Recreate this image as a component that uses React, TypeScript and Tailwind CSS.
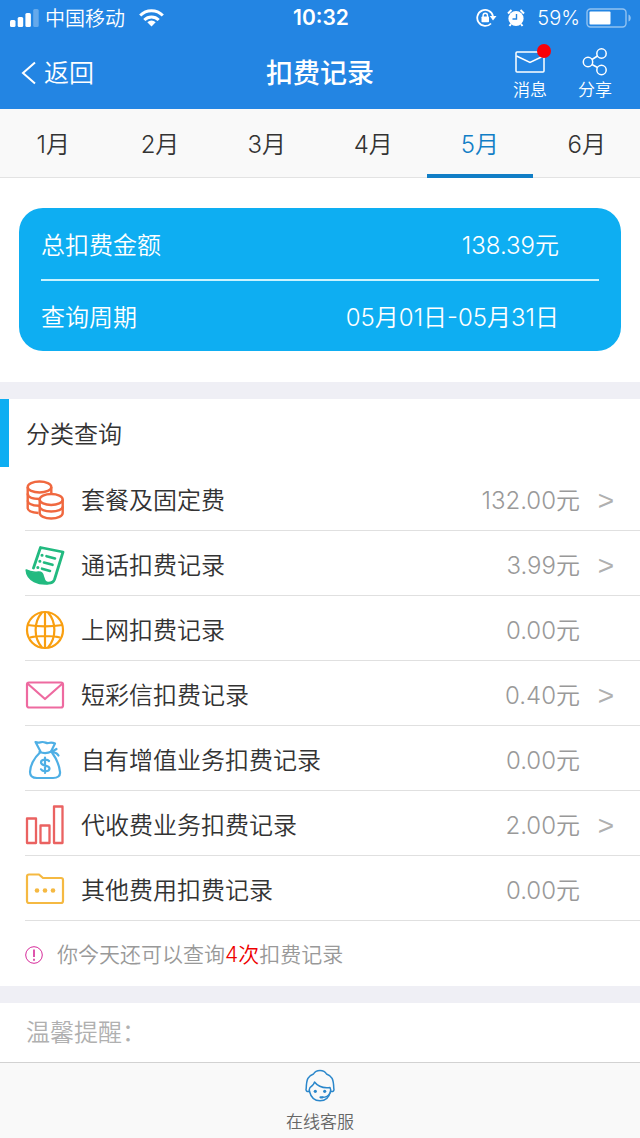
import type { ReactNode } from "react";

const months = ["1月", "2月", "3月", "4月", "5月", "6月"];
const activeMonth = "5月";

function CoinsIcon() {
  return (
    <svg width="40" height="40" viewBox="0 0 40 40" fill="none" stroke="#f0683f" strokeWidth="2.400" aria-hidden="true">
      <ellipse cx="14.500" cy="7" rx="11.800" ry="5.500" />
      <path d="M2.700 7v21c0 2.500 4 4.500 10.800 5" />
      <path d="M26.300 7v7" />
      <path d="M2.700 13.500c0 3.500 5 5.500 12.300 5.500M2.700 20.500c0 3 4 5 11.300 5.300" />
      <ellipse cx="26.200" cy="19.500" rx="11.500" ry="5.500" />
      <path d="M14.700 19.500v13.500c0 3 5 5.500 11.500 5.500S37.700 36 37.700 33V19.500" />
      <path d="M14.700 26.500c0 3 5 5 11.500 5S37.700 29.500 37.700 26.500" />
    </svg>
  );
}

function BillIcon() {
  return (
    <svg width="40" height="40" viewBox="0 0 40 40" fill="none" stroke="#22ba80" strokeLinecap="round" strokeLinejoin="round" aria-hidden="true">
      <path d="M8.500 23 15.500 2.500 38 7 29.500 34.500c-1.200 3-4.500 4-8 3.500" strokeWidth="2.800" />
      <path d="M1.200 25c4.500 2.500 8 2.500 12 2 3-.3 4.500.8 5 4 .5 3 1.500 5.500 4.500 7.800C14.500 39.500 2 36.500 1.200 25Z" fill="#22ba80" strokeWidth="1.600" />
      <path d="M21.500 11.200 30 13.500M19 17.500l8.500 2.300M17 23.700l8 2.300" strokeWidth="2.600" />
      <path d="M17 10.200h.1M14.800 16.300h.1M12.800 22.500h.1" strokeWidth="3" />
    </svg>
  );
}

function GlobeIcon() {
  return (
    <svg width="40" height="40" viewBox="0 0 40 40" fill="none" stroke="#f99f10" strokeWidth="2.200" aria-hidden="true">
      <circle cx="20" cy="20" r="18" />
      <path d="M20 2v36M2.500 15c10 1.500 25 1.500 35 0M5 27.500c8-2 22-2 30 0" />
      <path d="M17 2.500C8.500 12 8.500 28 17 37.500M23 2.500c8.500 9.500 8.500 25.500 0 35" />
    </svg>
  );
}

function MailIcon() {
  return (
    <svg width="40" height="40" viewBox="0 0 40 40" fill="none" stroke="#ee6aa0" strokeWidth="2.200" strokeLinejoin="round" aria-hidden="true">
      <rect x="2" y="7.500" width="36" height="25" rx="2" />
      <path d="m2.500 8.500 17.500 15.500 17.500-15.500" />
    </svg>
  );
}

function MoneyBagIcon() {
  return (
    <svg width="40" height="40" viewBox="0 0 40 40" fill="none" stroke="#4eafe5" strokeWidth="2.200" strokeLinecap="round" strokeLinejoin="round" aria-hidden="true">
      <path d="M15.500 11.500 10.500 2c3 1.500 4.500 0 7 0 3 0 3.500 1.500 6 1 2.500-.6 4-.6 6.500.500L26 11.500" />
      <path d="M14.500 12c4 1.500 9 1 12-.500 2-.8 3.500-1.500 5-2.500M28 12c2 .5 4.500 1.500 5.500 3.500" />
      <path d="M15 12.500C9 18 5 26 5 32c0 4.500 3 6 7 6h16c4.500 0 7.500-2 7-6-.7-7-4-14-8-19.500" />
      <path d="M24 21c-1.500-2-8-2-8 1.500 0 4 8.500 2.200 8.500 6 0 3.500-7 3.500-8.500.800M20 17.500V33" />
    </svg>
  );
}

function BarsIcon() {
  return (
    <svg width="40" height="40" viewBox="0 0 40 40" fill="none" stroke="#ea6261" strokeWidth="2.300" strokeLinejoin="round" aria-hidden="true">
      <path d="M2 13.500h9V38H2zM15.500 20.500h9V38h-9zM29 1.500h8.500V38H29z" />
    </svg>
  );
}

function FolderIcon() {
  return (
    <svg width="40" height="40" viewBox="0 0 40 40" fill="none" stroke="#f5b942" strokeWidth="2.200" strokeLinejoin="round" aria-hidden="true">
      <path d="M2 6.500c0-1.500.7-2 2-2h10l4 3.500h18c1.500 0 2 .7 2 2v21c0 1.300-.7 2-2 2H4c-1.300 0-2-.7-2-2Z" />
      <g fill="#f5b942" stroke="none">
        <circle cx="12" cy="20.500" r="2.300" />
        <circle cx="20" cy="20.500" r="2.300" />
        <circle cx="28" cy="20.500" r="2.300" />
      </g>
    </svg>
  );
}

type Row = { label: string; amount: string; icon: ReactNode; more: boolean };

const rows: Row[] = [
  { label: "套餐及固定费", amount: "132.00元", icon: <CoinsIcon />, more: true },
  { label: "通话扣费记录", amount: "3.99元", icon: <BillIcon />, more: true },
  { label: "上网扣费记录", amount: "0.00元", icon: <GlobeIcon />, more: false },
  { label: "短彩信扣费记录", amount: "0.40元", icon: <MailIcon />, more: true },
  { label: "自有增值业务扣费记录", amount: "0.00元", icon: <MoneyBagIcon />, more: false },
  { label: "代收费业务扣费记录", amount: "2.00元", icon: <BarsIcon />, more: true },
  { label: "其他费用扣费记录", amount: "0.00元", icon: <FolderIcon />, more: false },
];

function StatusBar() {
  return (
    <div className="grid h-9 grid-cols-3 items-center pr-2 pl-2.5 text-xl">
      <div className="flex items-center">
        <svg width="29" height="18" viewBox="0 0 29 18" fill="#fff" aria-hidden="true">
          <rect y="11" width="5.500" height="7" rx="1.500" />
          <rect x="7.700" y="8" width="5.500" height="10" rx="1.500" />
          <rect x="15.400" y="4" width="5.500" height="14" rx="1.500" />
          <rect x="23.200" y="0" width="5.500" height="18" rx="1.500" opacity=".3" />
        </svg>
        <span className="ml-1.5 pt-0.5 whitespace-nowrap">中国移动</span>
        <svg className="ml-3.5" width="25" height="18" viewBox="0 0 25 18" fill="none" stroke="#fff" strokeWidth="3" aria-hidden="true">
          <path d="M1.200 6.500a16 16 0 0 1 22.600 0M5.300 11a10.200 10.200 0 0 1 14.400 0" />
          <path d="M12.500 17.500 8.300 13.300a6 6 0 0 1 8.400 0Z" fill="#fff" stroke="none" />
        </svg>
      </div>
      <time className="text-center text-[21px] font-semibold">10:32</time>
      <div className="flex items-center justify-end">
        <svg width="21" height="20" viewBox="0 0 21 20" fill="none" stroke="#fff" strokeWidth="1.800" aria-label="方向锁定">
          <path d="M15 15.500A8 8 0 1 1 17 8" />
          <path d="M13.800 8h6.700L17 12.500Z" fill="#fff" stroke="none" />
          <rect x="5.500" y="8.500" width="7.500" height="5.800" rx=".8" fill="#fff" stroke="none" />
          <path d="M7.100 9V7.500a2.200 2.200 0 0 1 4.400 0V9" strokeWidth="1.400" />
        </svg>
        <svg className="ml-2.5" width="18" height="18" viewBox="0 0 18 18" aria-label="闹钟">
          <circle cx="9" cy="9.500" r="7.600" fill="#fff" />
          <path d="M1 4.500 4.500 1M17 4.500 13.500 1M4 15l-1.500 2M14 15l1.500 2" stroke="#fff" strokeWidth="2" />
          <path d="M9.500 5v5H5.500" fill="none" stroke="#2385e3" strokeWidth="1.400" />
        </svg>
        <span className="ml-3">59%</span>
        <svg className="ml-1.5" width="46" height="20" viewBox="0 0 46 20" aria-label="电量">
          <rect x="1" y="1" width="39" height="18" rx="3.500" fill="none" stroke="#fff" strokeWidth="1.400" opacity=".5" />
          <rect x="3.500" y="3.500" width="21" height="13" rx="1" fill="#fff" />
          <path d="M42.500 6.500c3 1 3 6 0 7Z" fill="#fff" opacity=".5" />
        </svg>
      </div>
    </div>
  );
}

function Header() {
  return (
    <header className="h-[109px] bg-[#2385e3] text-white">
      <StatusBar />
      <div className="grid h-[73px] grid-cols-3 items-center px-5">
        <button type="button" className="flex items-center gap-2 text-[25px]">
          <svg width="16" height="24" viewBox="0 0 16 24" fill="none" stroke="#fff" strokeWidth="2" aria-hidden="true">
            <path d="M15 1.500 3 12l12 10.500" />
          </svg>
          <span className="pt-0.5">返回</span>
        </button>
        <h1 className="pt-1 text-center text-[27px] font-medium whitespace-nowrap">扣费记录</h1>
        <div className="flex justify-end gap-[31px] pr-2 text-[17px] leading-5">
          <button type="button" className="flex flex-col items-center gap-0.5">
            <span className="relative flex h-8 items-center">
              <svg width="30" height="22" viewBox="0 0 30 22" fill="none" stroke="#fff" strokeWidth="1.500" aria-hidden="true">
                <rect x="1" y="1" width="28" height="20" rx="1" />
                <path d="m1.500 5 13.500 6.500L28.500 5" />
              </svg>
              <span className="absolute -top-0.5 -right-1.5 size-3.5 rounded-full bg-[#fa0008]" />
            </span>
            消息
          </button>
          <button type="button" className="flex flex-col items-center gap-0.5">
            <span className="flex h-8 items-center">
              <svg width="26" height="28" viewBox="0 0 26 28" fill="none" stroke="#fff" strokeWidth="1.500" aria-hidden="true">
                <circle cx="6" cy="14" r="4.700" />
                <circle cx="19.500" cy="5.500" r="4.700" />
                <circle cx="19.500" cy="22" r="4.700" />
                <path d="m10 11.500 5.500-3.500M10 16.500l5.500 3" />
              </svg>
            </span>
            分享
          </button>
        </div>
      </div>
    </header>
  );
}

function MonthTabs() {
  return (
    <nav className="grid h-[69px] grid-cols-6 border-b border-[#e3e3e3] bg-[#f9f9f9]" aria-label="月份">
      {months.map((month) => (
        <button
          key={month}
          type="button"
          className={
            month === activeMonth
              ? "-mb-px border-b-4 border-[#117ec6] pt-1.5 text-2xl text-[#117ec6]"
              : "pt-1 text-2xl text-[#333]"
          }
        >
          {month}
        </button>
      ))}
    </nav>
  );
}

function Summary() {
  return (
    <section className="px-[19px] pt-[30px] pb-[31px]">
      <dl className="rounded-3xl bg-[#0eaef2] px-[22px] text-2xl text-white">
        <div className="flex h-[73px] items-center justify-between border-b-2 border-[#c8f3ff] pt-1 pr-10">
          <dt>总扣费金额</dt>
          <dd>138.39元</dd>
        </div>
        <div className="flex h-[70px] items-center justify-between pt-1 pr-10">
          <dt>查询周期</dt>
          <dd>05月01日-05月31日</dd>
        </div>
      </dl>
    </section>
  );
}

function Categories() {
  return (
    <section className="border-t-[17px] border-[#efeff5]">
      <h2 className="flex h-[68px] items-center border-l-[9px] border-[#0eaef2] pt-1 pl-[17px] text-2xl text-[#333]">
        分类查询
      </h2>
      <ul className="-mt-px pl-[25px] text-2xl">
        {rows.map((row) => (
          <li key={row.label} className="border-b border-[#e0e0e0]">
            <button type="button" className="flex h-16 w-full items-center pt-1 pr-6 text-left">
              {row.icon}
              <span className="ml-4 pt-0.5 text-[#333]">{row.label}</span>
              <span className="ml-auto pt-0.5 text-[#999]">{row.amount}</span>
              <span className="ml-4 w-5 pt-0.5 text-center font-['Liberation_Sans',sans-serif] text-[28px] leading-8 text-[#b0b0b0]">
                {row.more ? ">" : ""}
              </span>
            </button>
          </li>
        ))}
      </ul>
      <p className="flex h-[65px] items-center pt-0.5 pl-[25px] text-[21px] text-[#999]">
        <svg className="mr-3.5" width="18" height="18" viewBox="0 0 18 18" fill="none" stroke="#d62b9a" aria-hidden="true">
          <circle cx="9" cy="9" r="8.300" />
          <path d="M9 3.500v7.500M9 12.800v2" strokeWidth="1.600" />
        </svg>
        <span>
          你今天还可以查询<em className="text-[#ee0000] not-italic">4次</em>扣费记录
        </span>
      </p>
    </section>
  );
}

function Footer() {
  return (
    <footer className="sticky bottom-0 h-[76px] border-t border-[#d2d2d2] bg-[#f9f9f9]">
      <button type="button" className="flex h-full w-full flex-col items-center justify-center gap-2 pt-0.5 text-[17px] leading-6 text-[#666]">
        <svg width="30" height="33" viewBox="0 0 30 33" fill="none" stroke="#2b87cb" strokeWidth="1.500" strokeLinecap="round" strokeLinejoin="round" aria-hidden="true">
          <path d="M4.500 22.500C1.500 23 .6 21.500 1.200 19.500 1.500 10 3 7 8.500 5c2.500-4.700 10.500-4.700 13 0C27 7 28.500 10 28.800 19.500c.6 2-.3 3.500-3.300 3" />
          <path d="M4.500 22.500C6 28.500 9.500 31.800 15 31.800S24 28.500 25.500 22.500c.5-2 0-3-.5-4-6 .8-12-1-15.500-5.500C9 16 6.500 17.500 5 18.500c-.7 1.300-1 2.500-.5 4Z" />
          <path d="M25 24c-1.500 3-4 4.300-7.500 4.300" />
          <path d="M17.500 28.300h-2" strokeWidth="2.200" />
          <circle cx="10.300" cy="22.300" r="1.600" fill="#2b87cb" stroke="none" />
          <circle cx="19.700" cy="22.300" r="1.600" fill="#2b87cb" stroke="none" />
        </svg>
        在线客服
      </button>
    </footer>
  );
}

export default function App() {
  return (
    <div
      className="flex min-h-screen flex-col bg-white font-['Inter','Noto_Sans_CJK_SC',sans-serif] font-[350]"
      lang="zh-CN"
    >
      <Header />
      <MonthTabs />
      <main className="flex-1">
        <Summary />
        <Categories />
        <section className="border-t-[17px] border-[#efeff5] px-[26px]">
          <h2 className="flex h-[59px] items-center text-2xl text-[#b0b0b0]">温馨提醒：</h2>
        </section>
      </main>
      <Footer />
    </div>
  );
}
